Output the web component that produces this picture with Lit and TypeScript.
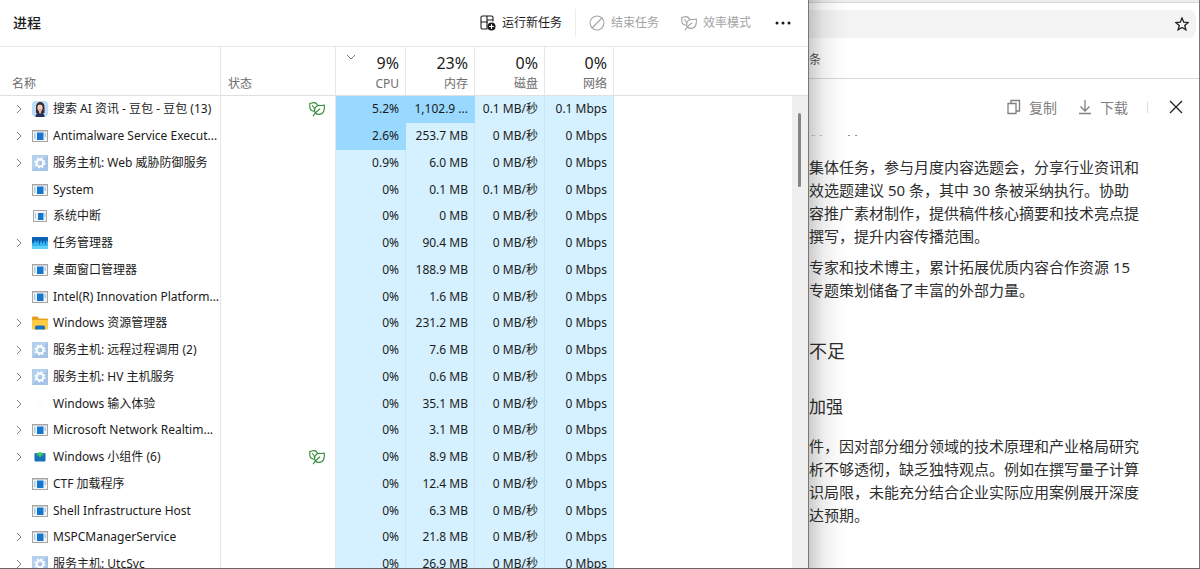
import { LitElement, html, css, svg, nothing } from "lit";
import { customElement, property } from "lit/decorators.js";
import { classMap } from "lit/directives/class-map.js";

type IconName = "avatar" | "app" | "appSmall" | "gear" | "monitor" | "folder" | "blank" | "widgets";

interface ProcessRow {
  name: string;
  icon: IconName;
  expandable?: boolean;
  eco?: boolean;
  cpu: string;
  mem: string;
  disk?: string;
  net?: string;
  hotCpu?: boolean;
  hotMem?: boolean;
}

const ROWS: ProcessRow[] = [
  { name: "搜索 AI 资讯 - 豆包 - 豆包 (13)", icon: "avatar", expandable: true, eco: true, cpu: "5.2%", mem: "1,102.9 ...", disk: "0.1 MB/秒", net: "0.1 Mbps", hotCpu: true, hotMem: true },
  { name: "Antimalware Service Execut...", icon: "app", expandable: true, cpu: "2.6%", mem: "253.7 MB", hotCpu: true },
  { name: "服务主机: Web 威胁防御服务", icon: "gear", expandable: true, cpu: "0.9%", mem: "6.0 MB" },
  { name: "System", icon: "app", cpu: "0%", mem: "0.1 MB", disk: "0.1 MB/秒" },
  { name: "系统中断", icon: "appSmall", cpu: "0%", mem: "0 MB" },
  { name: "任务管理器", icon: "monitor", expandable: true, cpu: "0%", mem: "90.4 MB" },
  { name: "桌面窗口管理器", icon: "app", cpu: "0%", mem: "188.9 MB" },
  { name: "Intel(R) Innovation Platform...", icon: "app", cpu: "0%", mem: "1.6 MB" },
  { name: "Windows 资源管理器", icon: "folder", expandable: true, cpu: "0%", mem: "231.2 MB" },
  { name: "服务主机: 远程过程调用 (2)", icon: "gear", expandable: true, cpu: "0%", mem: "7.6 MB" },
  { name: "服务主机: HV 主机服务", icon: "gear", expandable: true, cpu: "0%", mem: "0.6 MB" },
  { name: "Windows 输入体验", icon: "blank", expandable: true, cpu: "0%", mem: "35.1 MB" },
  { name: "Microsoft Network Realtim...", icon: "app", expandable: true, cpu: "0%", mem: "3.1 MB" },
  { name: "Windows 小组件 (6)", icon: "widgets", expandable: true, eco: true, cpu: "0%", mem: "8.9 MB" },
  { name: "CTF 加载程序", icon: "app", cpu: "0%", mem: "12.4 MB" },
  { name: "Shell Infrastructure Host", icon: "app", cpu: "0%", mem: "6.3 MB" },
  { name: "MSPCManagerService", icon: "app", expandable: true, cpu: "0%", mem: "21.8 MB" },
  { name: "服务主机: UtcSvc", icon: "gear", expandable: true, cpu: "0%", mem: "26.9 MB" },
];

const ART: Record<IconName, unknown> = {
  app: svg`
    <rect x="0.5" y="2.5" width="15" height="11" fill="#f6f4f2" stroke="#a5a5a5"/>
    <rect x="1" y="3" width="14" height="1" fill="#d0d0d0"/>
    <rect x="5" y="4.500" width="6.500" height="7.500" fill="#1576cf"/>
    <path d="M2 6h1.500M2 8h1.500M2 10h1.500M12.500 6H14M12.500 8H14" stroke="#5aa0dd"/>`,
  appSmall: svg`
    <rect x="1.500" y="2.500" width="13" height="11" fill="#f6f4f2" stroke="#a8a8a8"/>
    <rect x="6" y="5" width="5.500" height="7" fill="#1576cf"/>
    <path d="M3 6h1M3 8h1M3 10h1M12.500 6h1M12.500 8h1" stroke="#5aa0dd"/>`,
  avatar: svg`
    <rect width="16" height="16" rx="4" fill="#bcdcf8"/>
    <path d="M4 12V6c0-3 1.600-5 4.200-5S12.500 3 12.500 6v6z" fill="#3d2a2d"/>
    <ellipse cx="8" cy="6.800" rx="2.600" ry="3.400" fill="#f3cdbd"/>
    <path d="M5 5c1-2 4-2.500 6.200.2V3.500L8 2 5 3.500z" fill="#3d2a2d"/>
    <path d="M7 9.500h2.200v2.500H7z" fill="#eebfae"/>
    <path d="M3.500 16c.2-3 1.500-4.500 3.500-4.800L8 13l1.200-1.800c2 .3 3.200 1.800 3.400 4.800z" fill="#2a3150"/>
    <path d="M7.300 8.700h1.600" stroke="#c8475a" stroke-width=".7"/>`,
  gear: svg`
    <rect width="16" height="16" fill="#a3c4e6"/>
    <path d="M0 0h16L0 16z" fill="#b4d0ed"/>
    <circle cx="8" cy="8" r="3.400" fill="none" stroke="#fff" stroke-width="2"/>
    <circle cx="8" cy="8" r="4.800" fill="none" stroke="#fff" stroke-width="1.600" stroke-dasharray="1.880 1.890"/>`,
  monitor: svg`
    <rect y="2" width="16" height="12" rx="1" fill="#36b5f2"/>
    <path d="M0 3a1 1 0 0 1 1-1h14a1 1 0 0 1 1 1v4l-1.500-2-1 5-1.500-5-1.500 4L9 5 7.500 10 6 5 4.500 8 3 5 1.500 9 0 7z" fill="#0a5fb0"/>
    <path d="M0 11h16v2a1 1 0 0 1-1 1H1a1 1 0 0 1-1-1z" fill="#5fd0fb"/>`,
  folder: svg`
    <path d="M0 2.500A1 1 0 0 1 1 1.500h4.500l1.500 2H15a1 1 0 0 1 1 1V13H0z" fill="#e5a21c"/>
    <path d="M0 5h16v8.500a1 1 0 0 1-1 1H1a1 1 0 0 1-1-1z" fill="#fbcb45"/>
    <path d="M3 14.500v-2.300A1.700 1.700 0 0 1 4.700 10.500h6.600a1.700 1.700 0 0 1 1.700 1.700v2.300z" fill="#1673c5"/>`,
  blank: svg`<rect x="5" y="5" width="6" height="6" fill="#fcfcfc"/>`,
  widgets: svg`
    <rect x="2.500" y="4" width="11" height="8.500" rx="1" fill="#1470b8"/>
    <path d="M4 4h8v2.500L8 8.500 4 6.500z" fill="#24a08a"/>
    <path d="M6.500 3h3v2.500L8 7 6.500 5.500z" fill="#56d66a"/>`,
};

const icon = (name: IconName) =>
  html`<svg class="icon" viewBox="0 0 16 16" aria-hidden="true">${ART[name]}</svg>`;

const leaves = () => html`<svg class="leaf" viewBox="0 0 16 16" aria-hidden="true">
  <path d="M5 10.200C2.300 10 .8 8.200.8 5.600V2.400c1.400.3 2.300-.8 4-.8 1.900 0 3.100 1 3.600 2.600" />
  <path d="M6.300 12C4.600 8.200 6.400 4.400 10.300 4.400c1.900 0 3.300.3 5-.4.400 5-.6 9.400-5.200 9.400-1.600 0-2.800-.4-3.800-1.400z" />
  <path d="M4.300 14.800C5.700 12.200 7.700 10.200 10.800 8M3.400 4.600C4.800 5.600 5.500 7 5.700 8.900" />
</svg>`;

@customElement("process-window")
export class ProcessWindow extends LitElement {
  @property({ attribute: false }) rows: ProcessRow[] = ROWS;

  static styles = css`
    :host {
      display: flex;
      flex-direction: column;
      min-width: 0;
      overflow: hidden;
      background: #fff;
      color: #1b1b1b;
      font: 12px/16px "Noto Sans", "Noto Sans CJK SC", sans-serif;
    }
    .bar {
      flex: none;
      display: flex;
      align-items: center;
      height: 46px;
      padding: 0 17px 0 13px;
      border-bottom: 1px solid #e8e8e8;
    }
    h1 {
      flex: 1;
      margin: 0;
      font-size: 14px;
      line-height: 20px;
      font-weight: 500;
    }
    button {
      display: flex;
      align-items: center;
      border: 0;
      padding: 0;
      background: none;
      color: inherit;
      font: inherit;
    }
    .tool {
      gap: 6px;
    }
    .tool:disabled {
      color: #a3a3a3;
    }
    .glyph,
    .leaf {
      width: 16px;
      height: 16px;
      fill: none;
      stroke: currentColor;
      stroke-width: 1.1;
      stroke-linecap: round;
      stroke-linejoin: round;
    }
    .rule {
      width: 1px;
      height: 28px;
      margin: 0 13px;
      background: #ececec;
    }
    .gap {
      margin-left: 22px;
    }
    .more {
      margin-left: 24px;
    }
    .more .glyph {
      fill: currentColor;
      stroke: none;
    }
    .content {
      position: relative;
      flex: 1;
      min-height: 0;
      overflow: hidden;
    }
    table {
      width: 100%;
      table-layout: fixed;
      border-collapse: separate;
      border-spacing: 0;
    }
    .c-name { width: 221px; }
    .c-status { width: 115px; }
    .c-num { width: 69px; }
    .c-wide { width: 70px; }
    th,
    td {
      box-sizing: border-box;
      padding: 0;
      border-right: 1px solid #e6e6e6;
      text-align: right;
      font-weight: 400;
      white-space: nowrap;
    }
    th:last-child,
    td:last-child {
      border-right: 0;
    }
    th {
      height: 49px;
      padding-right: 6px;
      padding-bottom: 3px;
      vertical-align: bottom;
      border-bottom: 1px solid #e0e0e0;
      color: #6d6d6d;
    }
    td {
      padding-bottom: 2px;
    }
    .left {
      text-align: left;
      padding-left: 12px;
    }
    .status {
      padding-left: 7px;
    }
    .sum {
      display: block;
      margin-bottom: 2px;
      color: #1b1b1b;
      font-size: 16px;
      line-height: 22px;
    }
    .sorted {
      position: relative;
    }
    .sort {
      position: absolute;
      left: 10px;
      top: 6px;
      width: 10px;
      height: 8px;
      fill: none;
      stroke: #777;
    }
    tbody tr {
      height: 27px;
    }
    tbody tr:nth-child(4n + 5) {
      height: 26px;
    }
    .heat {
      padding-right: 6px;
      background: #d5f1ff;
      border-right-color: #cbe5f2;
    }
    .hot {
      background: #99d9ff;
      border-right-color: #99d9ff;
    }
    .proc {
      display: flex;
      align-items: center;
      padding-left: 14px;
    }
    .expander {
      width: 18px;
      flex: none;
    }
    .chev {
      width: 10px;
      height: 10px;
      fill: none;
      stroke: #808080;
    }
    .icon {
      flex: none;
      width: 16px;
      height: 16px;
      margin-right: 5px;
    }
    .eco {
      display: flex;
      justify-content: flex-end;
      padding-right: 10px;
      color: #2f8a35;
    }
    .track {
      position: absolute;
      right: 0;
      top: 49px;
      bottom: 0;
      width: 16px;
      background: #efefef;
    }
    .thumb {
      width: 3px;
      height: 74px;
      margin: 17px 0 0 6px;
      border-radius: 2px;
      background: #858585;
    }
  `;

  private renderRow(row: ProcessRow) {
    return html`<tr>
      <td>
        <div class="proc">
          <span class="expander">
            ${row.expandable
              ? html`<button aria-label="展开"><svg class="chev" viewBox="0 0 10 10"><path d="M3 1l4 4-4 4" /></svg></button>`
              : nothing}
          </span>
          ${icon(row.icon)}<span>${row.name}</span>
        </div>
      </td>
      <td>${row.eco ? html`<div class="eco">${leaves()}</div>` : nothing}</td>
      <td class=${classMap({ heat: true, hot: !!row.hotCpu })}>${row.cpu}</td>
      <td class=${classMap({ heat: true, hot: !!row.hotMem })}>${row.mem}</td>
      <td class="heat">${row.disk ?? "0 MB/秒"}</td>
      <td class="heat">${row.net ?? "0 Mbps"}</td>
      <td></td>
    </tr>`;
  }

  render() {
    return html`
      <header class="bar">
        <h1>进程</h1>
        <button class="tool">
          <svg class="glyph" viewBox="0 0 16 16" aria-hidden="true">
            <path d="M7 14H2.500A1.500 1.500 0 0 1 1 12.500v-10A1.500 1.500 0 0 1 2.500 1h9A1.500 1.500 0 0 1 13 2.500V6M1 7h6.500M7 1v13M7 5h6" />
            <circle cx="11.500" cy="11.500" r="4" fill="currentColor" stroke="none" />
            <path d="M11.500 9.500v4M9.500 11.500h4" stroke="#fff" />
          </svg>
          <span>运行新任务</span>
        </button>
        <span class="rule"></span>
        <button class="tool" disabled>
          <svg class="glyph" viewBox="0 0 16 16" aria-hidden="true"><circle cx="8" cy="8" r="7" /><path d="M3 13L13 3" /></svg>
          <span>结束任务</span>
        </button>
        <button class="tool gap" disabled>${leaves()}<span>效率模式</span></button>
        <button class="more" aria-label="更多">
          <svg class="glyph" viewBox="0 0 16 16" aria-hidden="true"><circle cx="2" cy="8" r="1.500" /><circle cx="8" cy="8" r="1.500" /><circle cx="14" cy="8" r="1.500" /></svg>
        </button>
      </header>
      <div class="content">
        <table>
          <colgroup>
            <col class="c-name" /><col class="c-status" /><col class="c-wide" /><col class="c-num" /><col class="c-wide" /><col class="c-num" /><col />
          </colgroup>
          <thead>
            <tr>
              <th class="left">名称</th>
              <th class="left status">状态</th>
              <th class="sorted">
                <svg class="sort" viewBox="0 0 10 8" aria-hidden="true"><path d="M1 2l4 4 4-4" /></svg>
                <span class="sum">9%</span>CPU
              </th>
              <th><span class="sum">23%</span>内存</th>
              <th><span class="sum">0%</span>磁盘</th>
              <th><span class="sum">0%</span>网络</th>
              <th></th>
            </tr>
          </thead>
          <tbody>${this.rows.map((row) => this.renderRow(row))}</tbody>
        </table>
        <div class="track"><div class="thumb"></div></div>
      </div>
    `;
  }
}

@customElement("document-window")
export class DocumentWindow extends LitElement {
  static styles = css`
    :host {
      display: flex;
      flex-direction: column;
      min-width: 0;
      overflow: hidden;
      background: #fff;
      color: #2e2e2e;
      font: 15px/23px "Noto Sans", "Noto Sans CJK SC", sans-serif;
      white-space: nowrap;
    }
    .tabs {
      flex: none;
      height: 2px;
      border-bottom: 1px solid #d9d9d9;
      background: #ededed;
    }
    .address {
      flex: none;
      display: flex;
      align-items: center;
      justify-content: flex-end;
      height: 28px;
      margin: 7px 3px 0 0;
      padding-right: 6px;
      border-radius: 0 8px 8px 0;
      background: #f3f3f3;
    }
    .bookmarks {
      flex: none;
      height: 40px;
      border-bottom: 1px solid #d9d9d9;
      color: #555;
      font-size: 12px;
      line-height: 44px;
    }
    .actions {
      flex: none;
      display: flex;
      align-items: center;
      justify-content: flex-end;
      height: 56px;
      padding-right: 15px;
      color: #808080;
      font-size: 14px;
    }
    button {
      display: flex;
      align-items: center;
      gap: 7px;
      border: 0;
      padding: 0;
      background: none;
      color: inherit;
      font: inherit;
    }
    .download {
      margin-left: 20px;
    }
    .rule {
      width: 1px;
      height: 11px;
      margin: 0 20px 0 19px;
      background: #dcdcdc;
    }
    .dark {
      color: #222;
    }
    svg {
      width: 16px;
      height: 16px;
      fill: none;
      stroke: currentColor;
      stroke-width: 1.3;
    }
    .dark .star {
      width: 14px;
      height: 14px;
      margin-right: 1px;
    }
    .article {
      flex: 1;
      min-height: 0;
      overflow: hidden;
      display: flex;
      flex-direction: column;
    }
    h2,
    h3,
    p {
      flex: none;
      margin: 0;
      font-weight: 400;
    }
    h2 {
      font-size: 18px;
      line-height: 28px;
      margin: 35px 0 30px;
    }
    h3 {
      font-size: 17px;
      line-height: 24px;
      margin-bottom: 16px;
    }
    .first {
      margin: -22px 0 15px;
      line-height: 28px;
    }
    p + p {
      margin-top: 8px;
    }
  `;

  render() {
    return html`
      <div class="tabs"></div>
      <div class="address">
        <button class="dark" aria-label="收藏">
          <svg class="star" viewBox="1 1 14 14"><path d="M8 2l1.700 4.200 4.500.3-3.500 2.900 1.200 4.400L8 11.400l-3.900 2.400 1.200-4.400L1.800 6.500l4.500-.3z" /></svg>
        </button>
      </div>
      <div class="bookmarks">条</div>
      <div class="actions">
        <button>
          <svg viewBox="0 0 16 16" aria-hidden="true"><path d="M2 4.500h8v10H2zM5 4.500v-3h8.500V12H10" /></svg><span>复制</span>
        </button>
        <button class="download">
          <svg viewBox="0 0 16 16" aria-hidden="true"><path d="M8 1v10.500M3.500 7.500L8 12l4.500-4.500M2 14.500h12" /></svg><span>下载</span>
        </button>
        <span class="rule"></span>
        <button class="dark" aria-label="关闭">
          <svg viewBox="0 0 16 16"><path d="M2 2l12 12M14 2L2 14" /></svg>
        </button>
      </div>
      <div class="article">
        <h2 class="first">协工作</h2>
        <p>集体任务，参与月度内容选题会，分享行业资讯和<br />效选题建议 50 条，其中 30 条被采纳执行。协助<br />容推广素材制作，提供稿件核心摘要和技术亮点提<br />撰写，提升内容传播范围。</p>
        <p>专家和技术博主，累计拓展优质内容合作资源 15<br />专题策划储备了丰富的外部力量。</p>
        <h2>不足</h2>
        <h3>加强</h3>
        <p>件，因对部分细分领域的技术原理和产业格局研究<br />析不够透彻，缺乏独特观点。例如在撰写量子计算<br />识局限，未能充分结合企业实际应用案例展开深度<br />达预期。</p>
      </div>
    `;
  }
}

@customElement("app-root")
export class AppRoot extends LitElement {
  static styles = css`
    :host {
      box-sizing: border-box;
      display: grid;
      grid-template-columns: 809fr 390fr;
      grid-template-rows: minmax(0, 1fr);
      height: 100vh;
      overflow: hidden;
      border-right: 1px solid #777;
      border-bottom: 1px solid #6b6468;
    }
    .front {
      border-right: 1px solid #777;
    }
    .back {
      position: relative;
      display: grid;
      min-width: 0;
      min-height: 0;
    }
    .shade {
      position: absolute;
      inset: 0 auto 0 0;
      width: 40px;
      pointer-events: none;
      background: linear-gradient(90deg, rgba(0, 0, 0, 0.2), rgba(0, 0, 0, 0.07) 35%, rgba(0, 0, 0, 0.02) 70%, transparent);
    }
  `;

  render() {
    return html`
      <process-window class="front"></process-window>
      <div class="back">
        <document-window></document-window>
        <div class="shade"></div>
      </div>
    `;
  }
}
